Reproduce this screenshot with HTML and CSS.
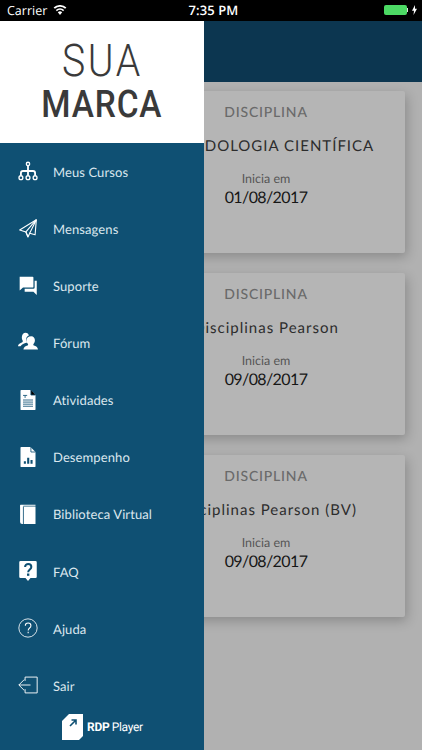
FILE: index.html
```html
<!DOCTYPE html>
<html lang="pt">
<head>
<meta charset="utf-8">
<title>Sua Marca</title>
<link rel="stylesheet" href="styles.css">
</head>
<body>
<div class="phone">
  <div class="status">
    <div class="status-left">
      <span>Carrier</span>
      <svg class="wifi" width="14" height="10" viewBox="0 0 14 10"><path fill="#fff" d="M7 10 4.800 7.300a3.200 3.200 0 0 1 4.400 0zM3.900 6.200 2.800 4.900a6.200 6.200 0 0 1 8.400 0l-1.100 1.300a4.600 4.600 0 0 0-6.200 0zM1.900 3.800.6 2.500a9.400 9.400 0 0 1 12.800 0l-1.300 1.300a7.700 7.700 0 0 0-10.200 0z"/></svg>
    </div>
    <div class="status-time">7:35 PM</div>
    <div class="status-right">
      <span class="battery"></span><span class="battery-tip"></span>
      <svg width="5" height="10" viewBox="0 0 5 10"><path fill="#fff" d="M3 0 0 5.800h2L1.500 10 5 3.800H3z"/></svg>
    </div>
  </div>
  <div class="stage">
    <main class="main">
      <div class="topbar"></div>
      <div class="cards">
        <article class="card">
          <div class="card-kicker">DISCIPLINA</div>
          <div class="card-title">METODOLOGIA CIENTÍFICA</div>
          <div class="card-label">Inicia em</div>
          <div class="card-date">01/08/2017</div>
        </article>
        <article class="card">
          <div class="card-kicker">DISCIPLINA</div>
          <div class="card-title">Disciplinas Pearson</div>
          <div class="card-label">Inicia em</div>
          <div class="card-date">09/08/2017</div>
        </article>
        <article class="card">
          <div class="card-kicker">DISCIPLINA</div>
          <div class="card-title">Disciplinas Pearson (BV)</div>
          <div class="card-label">Inicia em</div>
          <div class="card-date">09/08/2017</div>
        </article>
      </div>
    </main>
    <aside class="drawer">
      <div class="brand">
        <div class="brand-top">SUA</div>
        <div class="brand-bottom">MARCA</div>
      </div>
      <nav class="menu">
        <a class="item"><svg class="icon" viewBox="0 0 24 24" fill="none" stroke="#fff" stroke-width="1.600"><circle cx="12" cy="3.500" r="2"/><circle cx="3.500" cy="20" r="2.300"/><circle cx="12" cy="20" r="2.300"/><circle cx="20.500" cy="20" r="2.300"/><path stroke-width="2.200" d="M12 5.500V17.500M3.500 17.500V14.500Q3.500 12 6 12H18Q20.500 12 20.500 14.500V17.500"/></svg><span>Meus Cursos</span></a>
        <a class="item"><svg class="icon" viewBox="0 0 24 24" fill="none" stroke="#fff" stroke-width="1.300" stroke-linejoin="round"><path d="M22 2 2 14.500l7.500 2.200 2.500 6 2-4.500 6.500 2z"/><path d="M22 2 9.500 16.700 12 22.700M22 2 14 18.200"/></svg><span>Mensagens</span></a>
        <a class="item"><svg class="icon" viewBox="0 0 24 24" fill="#fff"><path d="M2 2h15.500a1 1 0 0 1 1 1v11a1 1 0 0 1-1 1H6l-4 3.500z"/><path d="M20 7h2.500v17l-4-4H8v-3.500h10.500a1.500 1.500 0 0 0 1.500-1.500z"/></svg><span>Suporte</span></a>
        <a class="item"><svg class="icon" viewBox="0 0 24 24"><path fill="#fff" d="M9 1c2.300 0 3.800 1.600 4 3.300C10.500 5 9.500 7.500 10 10c.2 1.200.8 2 1.300 2.700C8 13.500 5 14.800 3 17H0c0-2 2-3.500 4.500-4.500 1-.4 1.500-1 1.200-2C4.800 9 4.400 7.500 4.700 5.500 5 3 6.800 1 9 1z"/><path fill="#fff" d="M16 5c2.500 0 4.300 2 4.300 5 0 2-.9 3.600-1.800 4.600-.4.700-.2 1.300.6 1.600 2.400.9 4.600 1.800 4.900 4.800H6.500c.3-3 2.500-3.900 4.900-4.800.8-.3 1-.9.6-1.600-.9-1-1.800-2.600-1.800-4.600 0-3 1.800-5 5.800-5z"/></svg><span>Fórum</span></a>
        <a class="item"><svg class="icon" viewBox="0 0 24 24"><path fill="#fff" d="M4 0h11l6 6v17a1 1 0 0 1-1 1H4a1 1 0 0 1-1-1V1a1 1 0 0 1 1-1z"/><path stroke="#0f5073" stroke-width="1" d="M6 6.500h5M8.500 6.500v3M6 12h12M6 14.500h12M6 17h12M6 19.500h12M15.500 0v6H21"/></svg><span>Atividades</span></a>
        <a class="item"><svg class="icon" viewBox="0 0 24 24"><path fill="#fff" d="M4 0h11l6 6v17a1 1 0 0 1-1 1H4a1 1 0 0 1-1-1V1a1 1 0 0 1 1-1z"/><path stroke="#0f5073" stroke-width="1" fill="none" d="M15.500 0v6H21"/><path fill="#0f5073" d="M7 17h2.500v3H7zM11 13h2.500v7H11zM15 15.500h2.500V20H15z"/></svg><span>Desempenho</span></a>
        <a class="item"><svg class="icon" viewBox="0 0 24 24"><path fill="#fff" d="M3 1h18v1.200H6.500V3H21v21H5a2.500 2.500 0 0 1-2.500-2.500V3A2 2 0 0 1 3 1z"/><path stroke="#0f5073" stroke-width="1" d="M6.500 3v21"/></svg><span>Biblioteca Virtual</span></a>
        <a class="item"><svg class="icon" viewBox="0 0 24 24"><path fill="#fff" d="M3 0h18a1.500 1.500 0 0 1 1.500 1.500V19a1.500 1.500 0 0 1-1.500 1.500h-6L12 24l-3-3.500H3A1.500 1.500 0 0 1 1.500 19V1.500A1.500 1.500 0 0 1 3 0z"/><path fill="none" stroke="#0f5073" stroke-width="2.400" d="M8.500 7.200c0-5 7.500-5 7.500 0 0 3-3.800 3-3.800 6.300"/><path fill="#0f5073" d="M10.800 15h2.800v2.800h-2.800z"/></svg><span>FAQ</span></a>
        <a class="item"><svg class="icon" viewBox="0 0 24 24" fill="none" stroke="#fff" stroke-width="1"><circle cx="12" cy="12" r="11"/><path stroke-width="1.300" d="M8.800 9.200c0-4.400 6.700-4.400 6.700 0 0 2.800-3.300 2.800-3.300 5.800M12.200 16.500v1.800"/></svg><span>Ajuda</span></a>
        <a class="item"><svg class="icon" viewBox="0 0 24 24" fill="none" stroke="#fff" stroke-width="1.100"><path d="M8.500 7V2.500H23V21.500H8.500V17M1 12H15M7.500 5.500 1 12l6.500 6.500"/></svg><span>Sair</span></a>
      </nav>
      <div class="footer-logo">
        <svg width="21" height="26" viewBox="0 0 21 26"><path fill="#fff" d="M7 0h14v22l-4 4H0V7z"/><path fill="none" stroke="#0f5073" stroke-width="1.600" d="M8 12l5.500-5.500M9.500 6h4.500v4.500"/></svg>
        <span class="rdp">RDP</span><span class="player">Player</span>
      </div>
    </aside>
  </div>
</div>
</body>
</html>
```
FILE: styles.css
```css
* { box-sizing: border-box; }
html, body { margin: 0; padding: 0; }
body { width: 422px; height: 750px; overflow: hidden; background: #b1b1b1; }
.phone { display: flex; flex-direction: column; width: 422px; height: 750px; font-family: "Lato", "Open Sans", sans-serif; text-rendering: geometricPrecision; }
.status { height: 21px; flex: none; background: #000; color: #fff; display: grid; grid-template-columns: 1fr auto 1fr; align-items: center; padding: 0 5px 1px 7px; font-family: "Open Sans", sans-serif; font-size: 12.5px; }
.status-left { display: flex; align-items: center; gap: 6px; }
.status-time { font-size: 13px; font-weight: 600; letter-spacing: .1px; margin-right: -3px; }
.status-right { display: flex; align-items: center; justify-content: flex-end; }
.battery { width: 23px; height: 10px; background: #4cd964; border-radius: 2px; }
.battery-tip { width: 1.5px; height: 4px; background: #ddd; margin-right: 4px; }
.stage { position: relative; flex: 1; overflow: hidden; }
.main { display: flex; flex-direction: column; height: 100%; }
.topbar { height: 61px; flex: none; background: #0c3650; }
.cards { display: flex; flex-direction: column; gap: 20px; padding: 9px 17px 0 127px; }
.card { height: 162px; flex: none; background: #b5b5b5; border-radius: 2px; box-shadow: 2px 4px 12px rgba(0, 0, 0, .22); padding-top: 12px; display: flex; flex-direction: column; align-items: center; white-space: nowrap; }
.card-kicker { font-size: 14px; line-height: 17px; letter-spacing: .8px; color: #6a6a6a; font-weight: 500; }
.card-title { margin-top: 16px; font-size: 15px; line-height: 20px; letter-spacing: 1px; color: #2c2c2c; }
.card-label { margin-top: 15px; font-size: 12.5px; line-height: 16px; color: #555; }
.card-date { margin-top: 1px; font-size: 16px; line-height: 20px; color: #161616; letter-spacing: -.6px; }
.drawer { position: absolute; left: 0; top: 0; bottom: 0; width: 204px; background: #0f5073; display: flex; flex-direction: column; }
.brand { height: 122px; flex: none; background: #fff; color: #3a3a3a; display: flex; flex-direction: column; align-items: center; font-family: "Roboto", sans-serif; }
.brand-top { font-size: 45px; line-height: 40px; margin-top: 20px; font-weight: 300; letter-spacing: 3px; transform: scaleX(.87); }
.brand-bottom { font-size: 38px; line-height: 38px; margin-top: 5px; font-weight: 500; letter-spacing: 1px; transform: scaleX(.88); }
.menu { display: flex; flex-direction: column; }
.item { height: 57.15px; flex: none; display: flex; align-items: center; color: #dbe7ee; font-size: 13px; letter-spacing: .1px; padding-left: 18px; gap: 15px; }
.icon { width: 20px; height: 20px; flex: none; margin-top: -1px; }
.footer-logo { position: absolute; left: 62px; top: 693px; display: flex; align-items: center; color: #fff; font-family: "Roboto", sans-serif; font-size: 12px; }
.rdp { font-weight: 700; margin-left: 4px; letter-spacing: -.2px; }
.player { margin-left: 2px; font-weight: 400; letter-spacing: -.3px; }
```
